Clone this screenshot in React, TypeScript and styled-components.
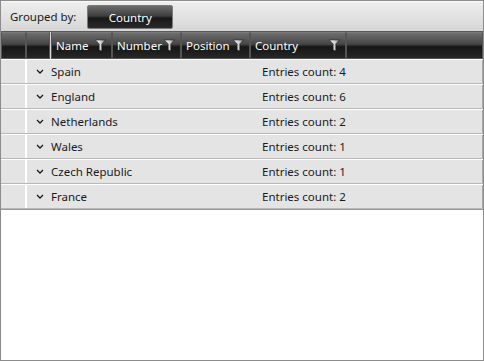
import * as React from "react";
import styled, { createGlobalStyle } from "styled-components";

const Global = createGlobalStyle`
    html, body {
        margin: 0;
        padding: 0;
        background: #ffffff;
    }
    body {
        font-family: "Noto Sans", "Open Sans", sans-serif;
        font-size: 11.5px;
    }
`;

const Grid = styled.div`
    box-sizing: border-box;
    width: 484px;
    height: 361px;
    border: 1px solid #8c8c8c;
    display: flex;
    flex-direction: column;
    background: #ffffff;
`;

const GroupPanel = styled.div`
    height: 30px;
    display: flex;
    align-items: center;
    gap: 11px;
    padding-left: 9px;
    background: linear-gradient(#eeeeee, #d6d6d6);
    border-top: 1px solid #f8f8f8;
    box-sizing: border-box;
    color: #1a1a1a;
`;

const GroupChip = styled.div`
    box-sizing: border-box;
    width: 86px;
    height: 24px;
    display: flex;
    align-items: center;
    justify-content: center;
    color: #ffffff;
    border: 1px solid #7a7a7a;
    border-radius: 2px;
    background: linear-gradient(#6c6c6c 0%, #3e3e3e 45%, #181818 55%, #2a2a2a 100%);
    margin-top: 1px;
`;

const Header = styled.div`
    height: 28px;
    display: flex;
    background: #4a4a4a;
    border-top: 1px solid #5a5a5a;
    box-sizing: border-box;
`;

const HeaderCell = styled.div<{ $w?: number; $grow?: boolean }>`
    box-sizing: border-box;
    ${(p) => (p.$grow ? "flex: 1;" : `width: ${p.$w}px; flex-shrink: 0;`)}
    display: flex;
    align-items: center;
    justify-content: space-between;
    padding: 0 5px 0 4px;
    color: #ffffff;
    border: 1px solid #555555;
    border-top-color: #7a7a7a;
    background: linear-gradient(#6e6e6e 0%, #454545 45%, #161616 55%, #262626 100%);
    white-space: nowrap;
    overflow: hidden;

    svg {
        flex-shrink: 0;
    }
`;

const Divider = styled.div`
    width: 1px;
    flex-shrink: 0;
    background: #d8d8d8;
`;

const Rows = styled.div`
    display: flex;
    flex-direction: column;
    border-bottom: 1px solid #9a9a9a;
`;

const GroupRow = styled.div`
    height: 25px;
    display: flex;
    box-sizing: border-box;
    border-top: 1px solid #ffffff;
    border-bottom: 1px solid #b8b8b8;
`;

const IndentCell = styled.div`
    width: 24px;
    background: #e4e4e4;
    border-right: 2px solid #ffffff;
`;

const GroupContent = styled.div`
    flex: 1;
    display: flex;
    align-items: center;
    background: #e4e4e4;
    border-right: 1px solid #a8a8a8;
    color: #1a1a1a;
`;

const Toggle = styled.span`
    width: 23px;
    display: flex;
    justify-content: center;
    padding-left: 1px;
`;

const GroupName = styled.span`
    width: 211px;
`;

const Filter = () => (
    <svg width="11" height="13" viewBox="0 0 11 13">
        <defs>
            <linearGradient id="fg" x1="0" x2="1" y1="0" y2="0">
                <stop offset="0" stopColor="#ffffff" />
                <stop offset="0.5" stopColor="#d8d8d8" />
                <stop offset="1" stopColor="#787878" />
            </linearGradient>
        </defs>
        <path d="M0.5 1 L10.5 1 L6.8 5 L6.8 12 L4.2 11 L4.2 5 Z" fill="url(#fg)" stroke="#222222" strokeWidth="0.6" />
    </svg>
);

const Chevron = () => (
    <svg width="8" height="5" viewBox="0 0 8 5">
        <polyline points="1,1 4,4 7,1" fill="none" stroke="#1a1a1a" strokeWidth="1.3" />
    </svg>
);

const groups = [
    { name: "Spain", count: 4 },
    { name: "England", count: 6 },
    { name: "Netherlands", count: 2 },
    { name: "Wales", count: 1 },
    { name: "Czech Republic", count: 1 },
    { name: "France", count: 2 },
];

const columns = [
    { title: "Name", w: 61 },
    { title: "Number", w: 69 },
    { title: "Position", w: 69 },
    { title: "Country", w: 96 },
];

export default function App() {
    return (
        <>
            <Global />
            <Grid>
                <GroupPanel>
                    <span>Grouped by:</span>
                    <GroupChip>Country</GroupChip>
                </GroupPanel>
                <Header>
                    <HeaderCell $w={25} />
                    <HeaderCell $w={24} />
                    <Divider />
                    {columns.map((c) => (
                        <HeaderCell key={c.title} $w={c.w}>
                            <span>{c.title}</span>
                            <Filter />
                        </HeaderCell>
                    ))}
                    <HeaderCell $grow />
                </Header>
                <Rows>
                    {groups.map((g) => (
                        <GroupRow key={g.name}>
                            <IndentCell />
                            <GroupContent>
                                <Toggle>
                                    <Chevron />
                                </Toggle>
                                <GroupName>{g.name}</GroupName>
                                <span>Entries count: {g.count}</span>
                            </GroupContent>
                        </GroupRow>
                    ))}
                </Rows>
            </Grid>
        </>
    );
}
